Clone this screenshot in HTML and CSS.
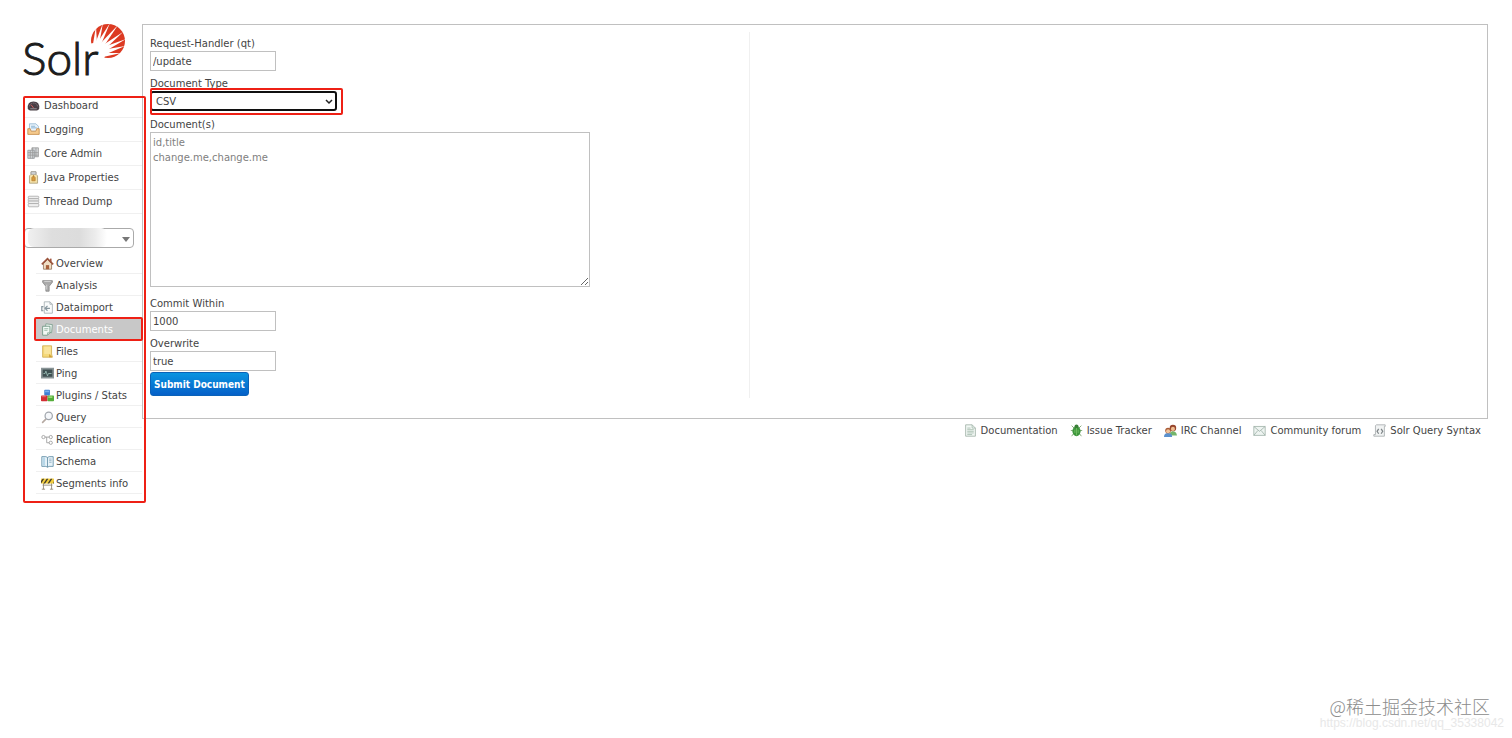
FILE: index.html
```html
<!DOCTYPE html>
<html lang="en">
<head>
<meta charset="utf-8">
<title>Solr Admin</title>
<link rel="stylesheet" href="styles.css">
</head>
<body>
<div class="page">
  <aside class="sidebar">
    <a class="logo" href="#" aria-label="Apache Solr">
      <svg class="logo-art" viewBox="0 0 106 60" width="106" height="60">
        <defs><clipPath id="sun"><circle cx="84" cy="17" r="18"/></clipPath></defs>
        <circle cx="84" cy="17" r="17" fill="#dc3a22"/>
        <g clip-path="url(#sun)" fill="#fff">
          <circle cx="70" cy="30" r="11"/>
          <path d="M69 20h4L72 2Z"/>
          <path d="M71 20 75 21 79-1Z"/>
          <path d="M72 21 76 23 86-1Z"/>
          <path d="M74 22 78 25 94 1Z"/>
          <path d="M76 23 79 27 99 8Z"/>
          <path d="M77 24 80 28 102 15Z"/>
          <path d="M78 26 80 31 101 22Z"/>
          <path d="M79 29 79 33 97 29Z"/>
        </g>
        <text class="logo-text" x="-2" y="51">Solr</text>
      </svg>
    </a>

    <nav class="main-nav" aria-label="Main">
      <a class="main-link" href="#"><svg class="icon" viewBox="0 0 16 16"><path d="M1 12Q0 3 8 3t7 9q-1 2-3 2H4q-2 0-3-2Z" fill="#493e45"/><path d="M3 9q1-4 5-4t5 4" fill="none" stroke="#8c7b84" stroke-dasharray="2 1"/><path d="M8 11 5 7" stroke="#e66"/><path d="M4 12h8" stroke="#a9a0a6"/></svg>Dashboard</a>
      <a class="main-link" href="#"><svg class="icon" viewBox="0 0 16 16"><path d="M3 1h8l3 3v7H3Z" fill="#e9f3fb" stroke="#8fb4d0"/><path d="M5 4h5M5 6h7" stroke="#79a9cc"/><path d="M1 7h3l1 3h6l1-3h3v7H1Z" fill="#f5c98c" stroke="#c38a49"/></svg>Logging</a>
      <a class="main-link" href="#"><svg class="icon" viewBox="0 0 16 16"><path d="M6 1h8v11H6Z" fill="#d4d7da" stroke="#999"/><path d="M1 4h8v10H1Z" fill="#cfd3d6" stroke="#959a9e"/><path d="M1 7h13M1 10h13M4 4v10M7 1v13M11 1v11" stroke="#999"/></svg>Core Admin</a>
      <a class="main-link" href="#"><svg class="icon" viewBox="0 0 16 16"><path d="M5 1h6v3l2 2v9H3V6l2-2Z" fill="#f5e2a9" stroke="#a99d79"/><path d="M5 1h6v3H5Z" fill="#d8dce0" stroke="#999"/><path d="M8 5v3M6 8l2-2 2 2v4H6Z" fill="#d79b3e" stroke="#b98332"/></svg>Java Properties</a>
      <a class="main-link" href="#"><svg class="icon" viewBox="0 0 16 16"><g fill="#eee" stroke="#aaa"><rect x="1.500" y="1.500" width="13" height="3" rx="1"/><rect x="1.500" y="4.500" width="13" height="3" rx="1"/><rect x="1.500" y="7.500" width="13" height="3" rx="1"/><rect x="1.500" y="10.500" width="13" height="4" rx="1"/></g></svg>Thread Dump</a>
    </nav>

    <div class="core-picker">
      <select class="core-select" aria-label="Core Selector"><option></option></select>
      <span class="core-mask"></span>
      <svg class="core-arrow" viewBox="0 0 8 5" width="8" height="5"><path d="M0 0h8L4 5Z" fill="#777"/></svg>
    </div>

    <nav class="core-nav" aria-label="Core">
      <a class="core-link" href="#"><svg class="icon" viewBox="0 0 16 16"><path d="M3 8 8 3l5 5v7H3Z" fill="#f0dfc5" stroke="#95755d"/><path d="M11 2h2v5h-2Z" fill="#a45843"/><path d="m1 9 7-7 7 7" fill="none" stroke="#9b543c" stroke-width="2"/><path d="M6 10h4v5H6Z" fill="#a8613c"/></svg>Overview</a>
      <a class="core-link" href="#"><svg class="icon" viewBox="0 0 16 16"><path d="M2 2h12v2l-4 5v6H6V9L2 4Z" fill="#aaa" stroke="#888"/><path d="M4 3h8M7 7v6" stroke="#ddd"/></svg>Analysis</a>
      <a class="core-link" href="#"><svg class="icon" viewBox="0 0 16 16"><path d="M4 1h7l3 3v11H4Z" fill="#fafcfc" stroke="#a3acb0"/><path d="M11 1v3h3" fill="none" stroke="#a3acb0"/><path d="M8 6 5 9l3 3M5 9h6M3 7H1v5h2" fill="none" stroke="#87979f" stroke-width="1.500"/></svg>Dataimport</a>
      <a class="core-link is-active" href="#" aria-current="page"><svg class="icon" viewBox="0 0 16 16"><path d="m6 1 8 1-1 10-8-1Z" fill="#eaf3ee" stroke="#799c8b"/><path d="M2 4h9v8l-3 3H2Z" fill="#f3faf6" stroke="#68917c"/><path d="M8 15v-3h3M4 7h5M4 9h4" fill="none" stroke="#8eaf9d"/></svg>Documents</a>
      <a class="core-link" href="#"><svg class="icon" viewBox="0 0 16 16"><path d="M2 1h11v10l1 4H2Z" fill="#f5d979" stroke="#d0ac50"/><path d="M4 2h8v9H4Z" fill="#f9e49c"/><path d="m10 11 4 4h-4Z" fill="#cf9e3a"/></svg>Files</a>
      <a class="core-link" href="#"><svg class="icon" viewBox="0 0 16 16"><path d="M1 2h14v11H1Z" fill="#3f5052" stroke="#899496" stroke-width="2"/><path d="M3 8h2l1-3 2 6 1-3h4" fill="none" stroke="#9fc3ba"/></svg>Ping</a>
      <a class="core-link" href="#"><svg class="icon" viewBox="0 0 16 16"><rect x="4" y="1" width="7" height="7" rx="1" fill="#3e7fd3"/><path d="M5 2h5v2H5Z" fill="#79b1ef"/><rect x="0" y="8" width="8" height="7" rx="1" fill="#d22e34"/><path d="M1 9h5v1H1Z" fill="#f17171"/><rect x="8" y="8" width="8" height="7" rx="1" fill="#54ad3a"/><path d="M9 9h5v2H9Z" fill="#9cdc78"/></svg>Plugins / Stats</a>
      <a class="core-link" href="#"><svg class="icon" viewBox="0 0 16 16"><path d="m6 10-4 4" stroke="#b5a9a2" stroke-width="2" stroke-linecap="round"/><circle cx="9.500" cy="6" r="4.500" fill="#f5f7fa" stroke="#a1a6ad" stroke-width="1.500"/></svg>Query</a>
      <a class="core-link" href="#"><svg class="icon" viewBox="0 0 16 16"><g fill="#fff" stroke="#999"><path d="M4 5h8M7 5v7h5" fill="none"/><circle cx="3" cy="5" r="2"/><circle cx="12" cy="5" r="2"/><circle cx="12" cy="12" r="2"/></g></svg>Replication</a>
      <a class="core-link" href="#"><svg class="icon" viewBox="0 0 16 16"><path d="M1 2h5l2 1 2-1h5v12h-5l-2 1-2-1H1Z" fill="#e7f2f8" stroke="#5c8aa3"/><path d="M8 3v12" stroke="#5c8aa3"/><path d="M10 5h3M10 7h3M10 9h3" stroke="#8dacc0"/><path d="M2 3h3v10H2Z" fill="#b7d7e8"/></svg>Schema</a>
      <a class="core-link" href="#"><svg class="icon" viewBox="0 0 16 16"><path d="M3 7v8M13 7v8M1 15h4M11 15h4M2 10h12" stroke="#8b806b"/><path d="M0 2h16v6H0Z" fill="#f3ce3e"/><path d="m2 2-2 3v3l4-6Zm5 0L3 8h2l4-6Zm5 0L8 8h2l4-6Zm4 3-1 3h1Z" fill="#443d2c"/></svg>Segments info</a>
      <span class="mark mark-documents"></span>
    </nav>
    <span class="mark mark-sidebar"></span>
  </aside>

  <div class="main">
    <main class="content">
      <form class="doc-form">
        <label class="label" for="qt">Request-Handler (qt)</label>
        <input class="field" id="qt" type="text" value="/update">
        <label class="label" for="type">Document Type</label>
        <div class="type-picker">
          <select class="type-select" id="type"><option>CSV</option></select>
          <svg class="type-arrow" viewBox="0 0 8 6" width="8" height="6"><path d="m1 1 3 3 3-3" fill="none" stroke="#222" stroke-width="1.500"/></svg>
          <span class="mark mark-type"></span>
        </div>
        <label class="label" for="docs">Document(s)</label>
        <textarea class="documents" id="docs" placeholder="id,title&#10;change.me,change.me"></textarea>
        <label class="label" for="within">Commit Within</label>
        <input class="field" id="within" type="text" value="1000">
        <label class="label" for="overwrite">Overwrite</label>
        <input class="field last-field" id="overwrite" type="text" value="true">
        <button class="submit" type="button">Submit Document</button>
      </form>
      <div class="result"></div>
    </main>

    <footer class="footer">
      <a class="footer-link" href="#"><svg class="icon" viewBox="0 0 16 16"><path d="M2 1h8l4 4v10H2Z" fill="#f2f8f4" stroke="#9eb0a5"/><path d="M10 1v4h4M4 5h4M4 7h8M4 9h8M4 11h8M4 13h6" fill="none" stroke="#a2b9ab"/></svg>Documentation</a>
      <a class="footer-link" href="#"><svg class="icon" viewBox="0 0 16 16"><path d="m2 2 3 3M14 2l-3 3M1 8h14M2 15l3-4M14 15l-3-4" stroke="#6f9a63"/><ellipse cx="8" cy="9" rx="5" ry="6" fill="#3d963c"/><circle cx="8" cy="3" r="2.500" fill="#397f37"/><path d="M8 5v9M6 7v4M10 7v4" stroke="#79c467"/></svg>Issue Tracker</a>
      <a class="footer-link" href="#"><svg class="icon" viewBox="0 0 16 16"><path d="M7 14q0-5 4-5t5 5Z" fill="#74b56b"/><circle cx="11" cy="5" r="4" fill="#97452d"/><circle cx="11" cy="6" r="2.500" fill="#efbd91"/><path d="M0 16q0-5 5-5t5 5Z" fill="#5b91cd"/><circle cx="5" cy="8" r="3.500" fill="#a85a35"/><circle cx="5" cy="9" r="2.500" fill="#f1c39a"/></svg>IRC Channel</a>
      <a class="footer-link" href="#"><svg class="icon" viewBox="0 0 16 16"><path d="M1 3h14v11H1Z" fill="#eef4f1" stroke="#9fb1a9"/><path d="m1 3 7 6 7-6M1 14l5-6M15 14l-5-6" fill="none" stroke="#9fb1a9"/></svg>Community forum</a>
      <a class="footer-link" href="#"><svg class="icon" viewBox="0 0 16 16"><path d="M4 1h11v2h-1v12H1v-2h2V2Z" fill="#f1f3f3" stroke="#a5aaac"/><path d="M7 6 5 9l2 3M10 6l2 3-2 3" fill="none" stroke="#7e8588" stroke-width="1.500"/></svg>Solr Query Syntax</a>
    </footer>
  </div>
</div>
<div class="watermark">
  <span class="watermark-name">@稀土掘金技术社区</span>
  <span class="watermark-url">https://blog.csdn.net/qq_35338042</span>
</div>
</body>
</html>
```
FILE: styles.css
```css
* { box-sizing: border-box; }

body {
  margin: 0;
  background: #fff;
  color: #444;
  font: 10px/15px "DejaVu Sans", Verdana, sans-serif;
}

a { color: inherit; text-decoration: none; }
.icon { flex: none; width: 13px; height: 13px; }

.page {
  display: flex;
  align-items: flex-start;
  padding: 24px 24px 0;
}

.sidebar {
  position: relative;
  flex: none;
  width: 118px;
  padding-bottom: 9px;
}

.logo { display: block; height: 70px; }
.logo-art { display: block; overflow: visible; }

.logo-text {
  font: 300 46px Lato, sans-serif;
  fill: #1c1c1c;
  stroke: #1c1c1c;
  stroke-width: 1px;
}

.main-link {
  display: flex;
  align-items: center;
  gap: 4px;
  height: 24px;
  padding-left: 3px;
  border-bottom: 1px solid #f0f0f0;
}

.core-picker { position: relative; width: 110px; margin: 14px 0 4px; }

.core-select {
  display: block;
  appearance: none;
  width: 100%;
  height: 20px;
  border: 1px solid #aaa;
  border-radius: 4px;
  background: #fff;
}

.core-mask {
  position: absolute;
  inset: 0 27px 1px 4px;
  border-radius: 6px;
  background: linear-gradient(90deg, #f0f0f0, #dedede 30%, #dcdcdc 65%, #ececec 85%, #fff);
  pointer-events: none;
}

.core-arrow { position: absolute; right: 4px; top: 9px; }

.core-nav { position: relative; margin-left: 12px; }

.core-link {
  display: flex;
  align-items: center;
  gap: 2px;
  height: 22px;
  padding: 2px 0 0 5px;
  border-bottom: 1px solid #f0f0f0;
}

.core-link.is-active { background: #c8c8c8; color: #fff; }

.mark {
  position: absolute;
  border: 2px solid #ee2015;
  border-radius: 2px;
  pointer-events: none;
}

.mark-sidebar { inset: 72px -4px 0 -1px; }
.mark-documents { top: 65px; left: -2px; right: -1px; height: 24px; }
.mark-type { inset: -3px -6px -4px 0; }

.main { flex: 1; min-width: 0; }

.content {
  display: flex;
  padding: 7px 7px 20px;
  border: 1px solid #c0c0c0;
}

.doc-form {
  display: flex;
  flex-direction: column;
  align-items: flex-start;
  width: 45%;
  padding: 4px 0 2px;
}

.result { flex: 1; border-left: 1px solid #f0f0f0; }

.label { height: 15px; }

.field,
.documents,
.type-select {
  color: #444;
  font: inherit;
  border: 1px solid #c0c0c0;
  background: #fff;
}

.field { width: 126px; height: 20px; margin-bottom: 5px; padding: 0 2px; }
.last-field { margin-bottom: 1px; }

.type-picker { position: relative; width: 187px; margin-bottom: 6px; }

.type-select {
  display: block;
  appearance: none;
  width: 100%;
  height: 20px;
  padding: 0 4px;
  border: 2px solid #101010;
  border-radius: 3px;
}

.type-arrow { position: absolute; right: 4px; top: 8px; }

.documents {
  width: 440px;
  max-width: 100%;
  height: 155px;
  margin-bottom: 9px;
  padding: 2px;
}

.documents::placeholder { color: #808080; }

.submit {
  height: 24px;
  padding: 0 3px;
  border: 1px solid #0a62b8;
  border-radius: 3px;
  background: linear-gradient(#0a94e0, #0560c8);
  color: #fff;
  font: bold 10px/15px "DejaVu Sans Condensed", Verdana, sans-serif;
}

.footer {
  display: flex;
  justify-content: flex-end;
  gap: 12px;
  padding: 4px 7px;
}

.footer-link { display: flex; align-items: center; gap: 4px; }

.watermark {
  position: absolute;
  right: 8px;
  bottom: 8px;
  display: flex;
  flex-direction: column;
  align-items: flex-end;
}

.watermark-name {
  padding-right: 14px;
  color: #8c8c8c;
  font: 300 18px/20px "Noto Sans CJK SC", sans-serif;
}

.watermark-url {
  color: #e8e8e8;
  font: 12px/14px "Liberation Sans", Arial, sans-serif;
}
```
